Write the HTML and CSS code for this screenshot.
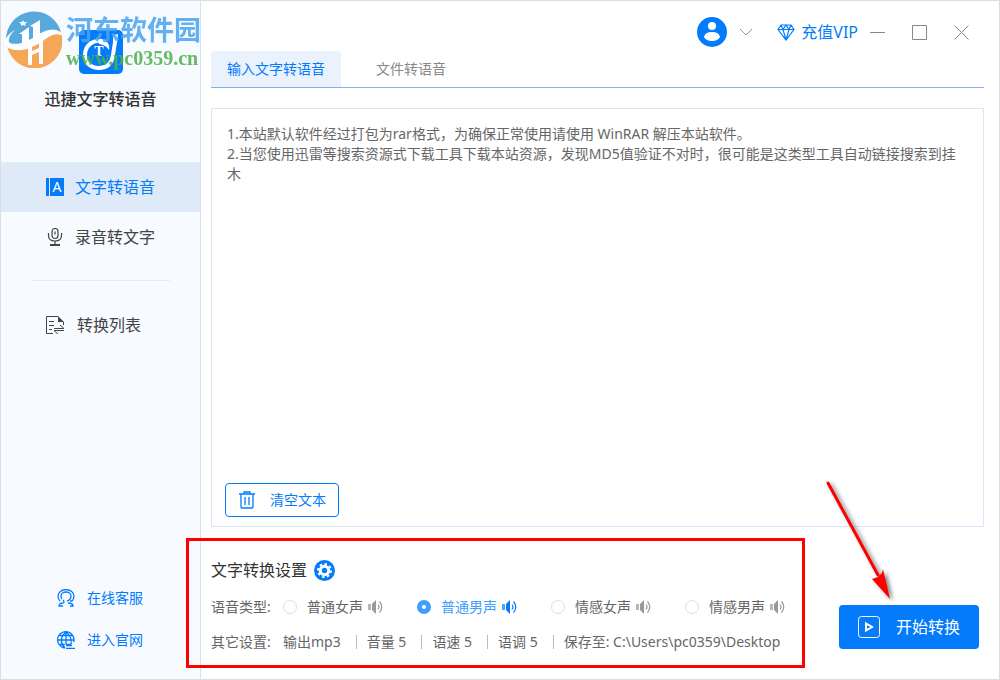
FILE: index.html
```html
<!DOCTYPE html>
<html lang="zh-CN">
<head>
    <meta charset="UTF-8">
    <meta name="viewport" content="width=device-width, initial-scale=1.0">
    <title>迅捷文字转语音</title>
    <link rel="stylesheet" href="styles.css">
</head>
<body>
    <svg class="sprite" aria-hidden="true">
        <symbol id="speaker" viewBox="0 0 15 14">
            <path d="M0 4h3v6H0z" opacity=".7"/>
            <path d="M4 4l4-4v14l-4-4z"/>
            <path d="M10 4.500q2 2.500 0 5M11.500 1.500q4.500 5.500 0 11" fill="none" stroke="currentColor" stroke-width="1.200"/>
        </symbol>
    </svg>

    <div class="window">
        <aside class="sidebar">
            <div class="brand">
                <svg class="logo" viewBox="0 0 44 44">
                    <rect width="44" height="44" rx="5" fill="#037bfb"/>
                    <path d="M26 12C15 8 6 15 6 25c0 8 6 13 14 13 9 0 13-6 14-13l3-19" fill="none" stroke="#fff" stroke-width="4"/>
                    <path d="M34 5l5-1-1 8h-4z" fill="#fff"/>
                    <path d="M20 11q5-2 8 1 3 3 2 8-3-5-10-6z" fill="#fff"/>
                    <text x="20" y="26" text-anchor="middle" class="logo-letter">T</text>
                </svg>
                <h1>迅捷文字转语音</h1>
                <div class="watermark">
                    <svg viewBox="0 0 58 58">
                        <path d="M2 30A28 28 0 0 1 57 22C49 17 41 20 32 26 22 32 9 38 2 30z" fill="#3a9bd4"/>
                        <path d="M3 36C12 41 24 38 34 30c9-7 18-10 24-5A28 28 0 0 1 3 36z" fill="#f5993a"/>
                        <path d="M11 20C3 27 2 35 12 36c12 0 20-9 31-14 8-3 13-1 15 4-4-3-9-2-15 2C31 37 18 44 4 38-2 33 2 25 11 20z" fill="#fff"/>
                        <path d="M15 24l10-7v15l-7 3V24zM26 16l10-6v17l-7 3V17z" fill="#fff"/>
                        <path d="M24 36l4-2v7l7-3v-8l4-3v27h-4V42l-7 3v10h-4z" fill="#fff"/>
                        <path d="M19 10l1 2h3l-2 2 1 2-3-1-2 1v-2l-2-2h3z" fill="#fff"/>
                    </svg>
                    <div class="watermark-text">
                        <span>河东软件园</span>
                        <b>www.pc0359.cn</b>
                    </div>
                </div>
            </div>

            <nav class="menu">
                <a href="#" class="active">
                    <svg viewBox="0 0 18 18">
                        <path d="M0 0h3v18H0zM4 0h14v18H4z" fill="#037bfb"/>
                        <text x="11" y="14" text-anchor="middle" class="icon-letter">A</text>
                    </svg>
                    文字转语音
                </a>
                <a href="#">
                    <svg viewBox="0 0 18 18" fill="none" stroke="#444" stroke-width="1.200">
                        <rect x="6" y=".5" width="6" height="10" rx="3"/>
                        <path d="M2.500 5v2.500q0 5.500 6.500 5.500t6.500-5.500V5M9 13v4M9 3.500v3"/>
                        <path d="M4 17h10" stroke-width="2"/>
                    </svg>
                    录音转文字
                </a>
                <hr>
                <a href="#" class="list">
                    <svg viewBox="0 0 18 18" fill="none" stroke="#444">
                        <path d="M7 17.500H.5V.5H12M17.500 6v3M3 5.500h5M3 9.500h5M3 13.500h3"/>
                        <path d="M12 0l6 6h-6z" fill="#444" stroke="none"/>
                        <path d="M8 12.500h10L14 9M18 14.500H8l4 3.500"/>
                    </svg>
                    转换列表
                </a>
            </nav>

            <div class="links">
                <a href="#">
                    <svg viewBox="0 0 18 18" fill="none" stroke="#037bfb" stroke-width="1.300">
                        <path d="M3 12q-2-2-2-5a8 6.500 0 0 1 16 0q0 3-2 5h-2"/>
                        <path d="M5 10q-1-1-1-3a5 4 0 0 1 10 0q0 4-4 5"/>
                        <path d="M6 11q2 2 0 3-4 0-4 3h4M11 14q5 0 5 3h-3"/>
                    </svg>
                    在线客服
                </a>
                <a href="#">
                    <svg viewBox="0 0 18 18" fill="none" stroke="#037bfb" stroke-width="1.300">
                        <path d="M8 17A8.200 8.200 0 1 1 17 9v2M9 1C3 6 3 12 8 17M9 1c5 4 5 7 5 10M9 1v12M2 4.500h14M1 9h16M2 13.500h6"/>
                        <path d="M9 13.500h4l2-2M15 14.500H9M9 17.500h9"/>
                    </svg>
                    进入官网
                </a>
            </div>
        </aside>

        <main class="main">
            <header class="titlebar">
                <button class="account" aria-label="账号">
                    <svg width="30" height="30" viewBox="0 0 30 30">
                        <circle cx="15" cy="15" r="15" fill="#037bfb"/>
                        <circle cx="15" cy="9" r="4" fill="#fff"/>
                        <path d="M7 20q1-5 8-5t8 5q-2 4-8 4t-8-4z" fill="#fff"/>
                    </svg>
                    <svg width="14" height="8" viewBox="0 0 14 8" fill="none" stroke="#999"><path d="M1 1l6 6 6-6"/></svg>
                </button>
                <a href="#" class="vip">
                    <svg width="18" height="17" viewBox="0 0 18 17" fill="none" stroke="#037bfb" stroke-width="1.200">
                        <path d="M4 1h10l3 4.500L9 16 1 5.500zM1 5.500h16M4 1l2 4.500L9 16l3-10.500L14 1M6 5.500L9 1l3 4.500"/>
                    </svg>
                    充值VIP
                </a>
                <div class="controls">
                    <button aria-label="最小化"><svg viewBox="0 0 15 15"><path d="M0 7.500h15"/></svg></button>
                    <button aria-label="最大化"><svg viewBox="0 0 15 15"><path d="M.5.500h14v14H.5z"/></svg></button>
                    <button aria-label="关闭"><svg viewBox="0 0 15 15"><path d="M.5.500l14 14M14.500.500l-14 14"/></svg></button>
                </div>
            </header>

            <div class="tabs">
                <button class="tab active">输入文字转语音</button>
                <button class="tab">文件转语音</button>
            </div>

            <section class="editor">
                <textarea aria-label="文本" spellcheck="false">1.本站默认软件经过打包为rar格式，为确保正常使用请使用 WinRAR 解压本站软件。
2.当您使用迅雷等搜索资源式下载工具下载本站资源，发现MD5值验证不对时，很可能是这类型工具自动链接搜索到挂木</textarea>
                <button class="clear">
                    <svg width="16" height="18" viewBox="0 0 16 18" fill="none" stroke="#037bfb" stroke-width="1.300">
                        <path d="M0 3h16M5 3V1h6v2M2 3v13q0 1 1 1h10q1 0 1-1V3M6 6v8M10 6v8"/>
                    </svg>
                    清空文本
                </button>
            </section>

            <footer class="footer">
                <section class="settings">
                    <h2>
                        文字转换设置
                        <svg width="21" height="21" viewBox="0 0 21 21">
                            <circle cx="10.500" cy="10.500" r="10.500" fill="#037bfb"/>
                            <circle cx="10.500" cy="10.500" r="6.500" fill="none" stroke="#fff" stroke-width="2" pathLength="16" stroke-dasharray="1 1"/>
                            <circle cx="10.500" cy="10.500" r="4.200" fill="none" stroke="#fff" stroke-width="3"/>
                        </svg>
                    </h2>
                    <div class="row">
                        <span class="name">语音类型:</span>
                        <label class="voice"><input type="radio" name="voice">普通女声<svg><use href="#speaker"/></svg></label>
                        <label class="voice"><input type="radio" name="voice" checked>普通男声<svg><use href="#speaker"/></svg></label>
                        <label class="voice"><input type="radio" name="voice">情感女声<svg><use href="#speaker"/></svg></label>
                        <label class="voice"><input type="radio" name="voice">情感男声<svg><use href="#speaker"/></svg></label>
                    </div>
                    <div class="row">
                        <span class="name">其它设置:</span>
                        <span class="option">输出mp3</span>
                        <span class="option">音量 5</span>
                        <span class="option">语速 5</span>
                        <span class="option">语调 5</span>
                        <span class="option">保存至: C:\Users\pc0359\Desktop</span>
                    </div>
                </section>
                <button class="start">
                    <svg width="22" height="22" viewBox="0 0 22 22" fill="none" stroke="#fff">
                        <rect x=".5" y=".5" width="21" height="21" rx="3"/>
                        <path d="M8 7.500v7l6-3.500z" stroke-width="2"/>
                    </svg>
                    开始转换
                </button>
                <svg class="arrow" width="76" height="126" viewBox="0 0 76 126">
                    <path d="M8 6L58 98" stroke="#f00" stroke-width="3" stroke-linecap="round"/>
                    <path d="M52 102l6-2 4-4 1-4 7 30z" fill="#f00"/>
                </svg>
            </footer>
        </main>
    </div>
</body>
</html>
```

FILE: styles.css
```css
* {
    box-sizing: border-box;
}
body {
    margin: 0;
    font-family: "Noto Sans", "Noto Sans CJK SC", sans-serif;
    font-size: 14px;
    line-height: 20px;
    color: #666;
}
button, textarea {
    font: inherit;
    color: inherit;
    background: none;
    border: none;
    padding: 0;
}
button {
    cursor: pointer;
}
a {
    color: #037bfb;
    text-decoration: none;
}
h1, h2 {
    margin: 0;
    font-size: 16px;
    line-height: 24px;
    color: #333;
}
svg {
    flex: none;
    display: block;
}
.sprite {
    display: none;
}
.window {
    display: flex;
    min-height: 100vh;
    border: 1px solid #ddd;
    background: #fff;
}

/* sidebar */
.sidebar {
    flex: none;
    display: flex;
    flex-direction: column;
    width: 200px;
    background: #f7faff;
    border-right: 1px solid #cfe3f9;
}
.brand {
    position: relative;
    display: flex;
    flex-direction: column;
    align-items: center;
    gap: 13px;
    height: 161px;
    padding-top: 29px;
    overflow: hidden;
}
.brand h1 {
    font-weight: 500;
}
.logo {
    width: 44px;
    height: 44px;
}
.logo-letter {
    font: bold 14px "Liberation Serif", serif;
    fill: #fff;
}
.icon-letter {
    font: 14px "Noto Sans", sans-serif;
    fill: #fff;
}
.watermark {
    position: absolute;
    top: 9px;
    left: 3px;
    display: flex;
    gap: 4px;
    opacity: 0.85;
}
.watermark svg {
    width: 58px;
    height: 58px;
}
.watermark-text {
    display: flex;
    flex-direction: column;
    font: bold 27px/38px "Noto Sans CJK SC", sans-serif;
    color: #4ba3ee;
    white-space: nowrap;
}
.watermark-text b {
    font: bold 20px/20px "Liberation Serif", serif;
    color: #4caf48;
}
.menu a {
    display: flex;
    align-items: center;
    gap: 11px;
    height: 50px;
    padding-left: 45px;
    font-size: 16px;
    color: #444;
}
.menu a.active {
    background: #deeaf8;
    color: #037bfb;
}
.menu a.list {
    gap: 13px;
}
.menu svg, .links svg {
    width: 18px;
    height: 18px;
}
.menu hr {
    margin: 18px 30px 19px;
    border: none;
    border-top: 1px solid #e0ecfa;
}
.links {
    display: flex;
    flex-direction: column;
    gap: 22px;
    margin-top: auto;
    padding: 0 0 29px 56px;
}
.links a {
    display: flex;
    align-items: center;
    gap: 12px;
}

/* main area */
.main {
    flex: 1;
    display: flex;
    flex-direction: column;
    padding: 0 15px 0 10px;
}
.titlebar {
    display: flex;
    justify-content: flex-end;
    align-items: center;
    height: 50px;
    padding: 12px 15px 0 0;
}
.account {
    display: flex;
    align-items: center;
    gap: 12px;
    margin-right: 24px;
}
.vip {
    display: flex;
    align-items: center;
    gap: 6px;
    margin-right: 12px;
    font-size: 16px;
}
.controls {
    display: flex;
    gap: 27px;
}
.controls svg {
    width: 15px;
    height: 15px;
    fill: none;
    stroke: #888;
}
.tabs {
    display: flex;
    border-bottom: 1px solid #84b2e6;
}
.tab {
    height: 36px;
    padding: 0 35px;
    color: #888;
}
.tab.active {
    padding: 0 16px;
    background: #eaf2fe;
    border-radius: 4px 4px 0 0;
    color: #037bfb;
}
.editor {
    flex: 1;
    display: flex;
    flex-direction: column;
    align-items: flex-start;
    margin-top: 20px;
    padding: 15px 13px 9px;
    border: 1px solid #d9e7f8;
}
.editor textarea {
    flex: 1;
    width: 100%;
    padding: 0 2px;
    resize: none;
    outline: none;
    overflow: hidden;
}
.clear {
    display: flex;
    align-items: center;
    gap: 15px;
    height: 34px;
    padding: 0 12px 0 13px;
    border: 1px solid #037bfb;
    border-radius: 4px;
    color: #037bfb;
}
.footer {
    position: relative;
    display: flex;
    justify-content: space-between;
    align-items: flex-end;
    padding: 31px 5px 27px 0;
}
.settings {
    position: relative;
    display: flex;
    flex-direction: column;
    gap: 15px;
}
.settings::after {
    content: "";
    position: absolute;
    inset: -20px -20px -16px -25px;
    border: 3px solid #f00;
    pointer-events: none;
}
.settings h2 {
    display: flex;
    align-items: center;
    gap: 7px;
    font-weight: normal;
}
.row {
    display: flex;
    align-items: center;
}
.name {
    width: 72px;
}
.voice {
    display: flex;
    align-items: center;
    width: 134px;
}
.voice:last-child {
    width: auto;
}
.voice input {
    appearance: none;
    width: 14px;
    height: 14px;
    margin: 0 10px 0 0;
    border: 1px solid #dcdfe6;
    border-radius: 50%;
    background: #fff;
}
.voice input:checked {
    border: 5px solid #409eff;
}
.voice:has(input:checked) {
    color: #409eff;
}
.voice svg {
    width: 15px;
    height: 14px;
    margin-left: 5px;
    fill: currentColor;
    color: #999;
}
.voice input:checked ~ svg {
    color: #037bfb;
}
.option {
    display: flex;
    align-items: center;
}
.option:not(:last-child)::after {
    content: "";
    height: 14px;
    margin: 0 10px 0 15px;
    border-left: 1px solid #bbb;
}
.start {
    display: flex;
    align-items: center;
    gap: 16px;
    height: 44px;
    padding: 0 19px;
    margin-bottom: 3px;
    border-radius: 4px;
    background: #037bfb;
    color: #fff;
    font-size: 16px;
}
.arrow {
    position: absolute;
    right: 88px;
    bottom: 76px;
    filter: drop-shadow(3px 2px 2px rgba(0, 0, 0, 0.5));
}
```
